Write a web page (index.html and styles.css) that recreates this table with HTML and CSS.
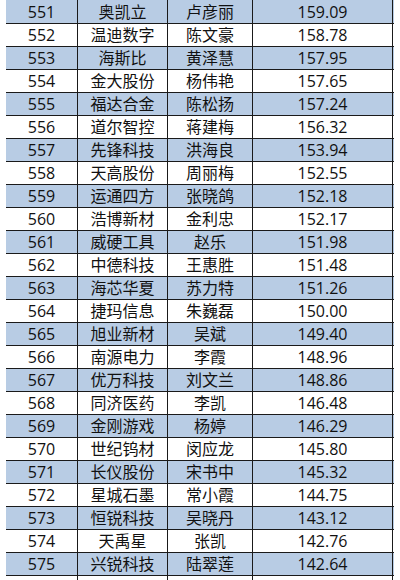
FILE: index.html
```html
<!DOCTYPE html>
<html>
<head>
<meta charset="utf-8">
<link rel="stylesheet" href="styles.css">
</head>
<body>
<div class="sheet">
  <div class="row blue first"><div class="c">551</div><div class="c">奥凯立</div><div class="c">卢彦丽</div><div class="c">159.09</div></div>
  <div class="row"><div class="c">552</div><div class="c">温迪数字</div><div class="c">陈文豪</div><div class="c">158.78</div></div>
  <div class="row blue"><div class="c">553</div><div class="c">海斯比</div><div class="c">黄泽慧</div><div class="c">157.95</div></div>
  <div class="row"><div class="c">554</div><div class="c">金大股份</div><div class="c">杨伟艳</div><div class="c">157.65</div></div>
  <div class="row blue"><div class="c">555</div><div class="c">福达合金</div><div class="c">陈松扬</div><div class="c">157.24</div></div>
  <div class="row"><div class="c">556</div><div class="c">道尔智控</div><div class="c">蒋建梅</div><div class="c">156.32</div></div>
  <div class="row blue"><div class="c">557</div><div class="c">先锋科技</div><div class="c">洪海良</div><div class="c">153.94</div></div>
  <div class="row"><div class="c">558</div><div class="c">天高股份</div><div class="c">周丽梅</div><div class="c">152.55</div></div>
  <div class="row blue"><div class="c">559</div><div class="c">运通四方</div><div class="c">张晓鸽</div><div class="c">152.18</div></div>
  <div class="row"><div class="c">560</div><div class="c">浩博新材</div><div class="c">金利忠</div><div class="c">152.17</div></div>
  <div class="row blue"><div class="c">561</div><div class="c">威硬工具</div><div class="c">赵乐</div><div class="c">151.98</div></div>
  <div class="row"><div class="c">562</div><div class="c">中德科技</div><div class="c">王惠胜</div><div class="c">151.48</div></div>
  <div class="row blue"><div class="c">563</div><div class="c">海芯华夏</div><div class="c">苏力特</div><div class="c">151.26</div></div>
  <div class="row"><div class="c">564</div><div class="c">捷玛信息</div><div class="c">朱巍磊</div><div class="c">150.00</div></div>
  <div class="row blue"><div class="c">565</div><div class="c">旭业新材</div><div class="c">吴斌</div><div class="c">149.40</div></div>
  <div class="row"><div class="c">566</div><div class="c">南源电力</div><div class="c">李霞</div><div class="c">148.96</div></div>
  <div class="row blue"><div class="c">567</div><div class="c">优万科技</div><div class="c">刘文兰</div><div class="c">148.86</div></div>
  <div class="row"><div class="c">568</div><div class="c">同济医药</div><div class="c">李凯</div><div class="c">146.48</div></div>
  <div class="row blue"><div class="c">569</div><div class="c">金刚游戏</div><div class="c">杨婷</div><div class="c">146.29</div></div>
  <div class="row"><div class="c">570</div><div class="c">世纪钨材</div><div class="c">闵应龙</div><div class="c">145.80</div></div>
  <div class="row blue"><div class="c">571</div><div class="c">长仪股份</div><div class="c">宋书中</div><div class="c">145.32</div></div>
  <div class="row"><div class="c">572</div><div class="c">星城石墨</div><div class="c">常小霞</div><div class="c">144.75</div></div>
  <div class="row blue"><div class="c">573</div><div class="c">恒锐科技</div><div class="c">吴晓丹</div><div class="c">143.12</div></div>
  <div class="row"><div class="c">574</div><div class="c">天禹星</div><div class="c">张凯</div><div class="c">142.76</div></div>
  <div class="row blue"><div class="c">575</div><div class="c">兴锐科技</div><div class="c">陆翠莲</div><div class="c">142.64</div></div>
  <div class="row"><div class="c"></div><div class="c"></div><div class="c"></div><div class="c"></div></div>
</div>
</body>
</html>
```

FILE: styles.css
```css
html, body {
  margin: 0;
  padding: 0;
  background: #ffffff;
}

.sheet {
  padding-left: 6px;
  width: 388px;
  font-family: "Open Sans", "Noto Sans CJK SC", sans-serif;
  font-size: 16px;
  color: #111111;
}

.row {
  display: grid;
  grid-template-columns: 72px 90px 85px 140px;
  height: 23px;
  box-sizing: border-box;
  border-bottom: 1px solid #1a1a1a;
  background: #ffffff;
}

.row.first {
  height: 24px;
}

.row.blue {
  background: #b8cce4;
}

.c {
  border-right: 1px solid #1a1a1a;
  display: flex;
  align-items: center;
  justify-content: center;
  line-height: 1;
  white-space: nowrap;
  overflow: hidden;
}
```
